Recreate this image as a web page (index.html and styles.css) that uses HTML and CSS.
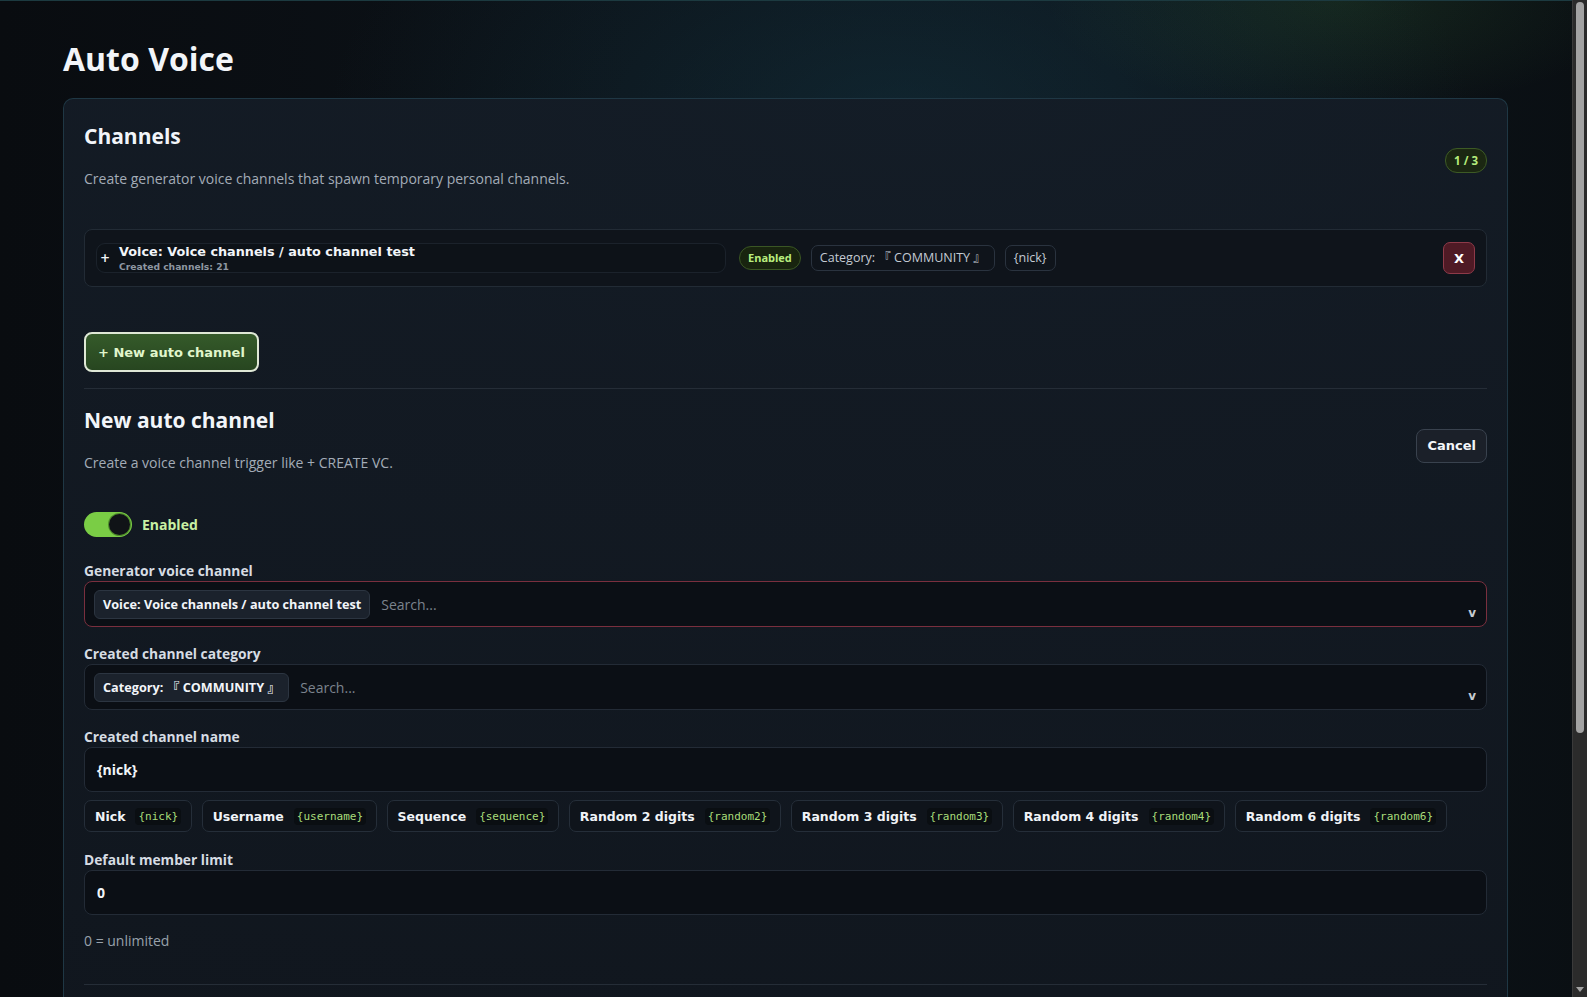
FILE: index.html
```html
<!DOCTYPE html>
<html lang="en">

<head>
	<meta charset="utf-8" />
	<title>Auto Voice</title>
	<link rel="stylesheet" href="styles.css">
</head>

<body>
	<main class="page">
		<h1 class="page-title">Auto Voice</h1>

		<section class="card">
			<header class="card-head">
				<div>
					<h2 class="card-title">Channels</h2>
					<p class="muted">Create generator voice channels that spawn temporary personal channels.</p>
				</div>
				<span class="count">1 / 3</span>
			</header>

			<!-- existing auto channels -->
			<div class="channel-row">
				<button class="row-expand" type="button">
					<span class="row-plus">+</span>
					<span class="row-text">
						<strong>Voice: Voice channels / auto channel test</strong>
						<small>Created channels: 21</small>
					</span>
				</button>
				<span class="pill-on">Enabled</span>
				<span class="chip">Category: 『 COMMUNITY 』</span>
				<span class="chip">{nick}</span>
				<button class="btn-remove" type="button">X</button>
			</div>

			<button class="btn-new" type="button">+ New auto channel</button>

			<hr class="divider">

			<!-- editor -->
			<header class="card-head form-head">
				<div>
					<h2 class="card-title">New auto channel</h2>
					<p class="muted">Create a voice channel trigger like + CREATE VC.</p>
				</div>
				<button class="btn-cancel" type="button">Cancel</button>
			</header>

			<label class="switch">
				<span class="switch-track"><span class="switch-knob"></span></span>
				<span class="switch-label">Enabled</span>
			</label>

			<div class="field">
				<div class="field-label">Generator voice channel</div>
				<div class="select select-invalid">
					<span class="select-chip">Voice: Voice channels / auto channel test</span>
					<span class="select-search">Search...</span>
					<span class="select-caret">v</span>
				</div>
			</div>

			<div class="field">
				<div class="field-label">Created channel category</div>
				<div class="select">
					<span class="select-chip">Category: 『 COMMUNITY 』</span>
					<span class="select-search">Search...</span>
					<span class="select-caret">v</span>
				</div>
			</div>

			<div class="field field-tokens">
				<div class="field-label">Created channel name</div>
				<div class="input">{nick}</div>
				<div class="tokens">
					<span class="token">Nick <code>{nick}</code></span>
					<span class="token">Username <code>{username}</code></span>
					<span class="token">Sequence <code>{sequence}</code></span>
					<span class="token">Random 2 digits <code>{random2}</code></span>
					<span class="token">Random 3 digits <code>{random3}</code></span>
					<span class="token">Random 4 digits <code>{random4}</code></span>
					<span class="token">Random 6 digits <code>{random6}</code></span>
				</div>
			</div>

			<div class="field">
				<div class="field-label">Default member limit</div>
				<div class="input">0</div>
				<p class="muted hint">0 = unlimited</p>
			</div>

			<hr class="divider divider-end">
		</section>
	</main>

	<!-- window scrollbar -->
	<div class="scrollbar">
		<span class="scrollbar-thumb"></span>
		<span class="scrollbar-arrow"></span>
	</div>
</body>

</html>
```

FILE: styles.css
```css
html {
	color-scheme: dark;
	background: #0a0d12;
}

body,
h1,
h2,
p,
hr {
	margin: 0;
	padding: 0;
}

body {
	height: 100vh;
	overflow: hidden;
	color: #e8edf3;
	font: 14px/1.5 "Open Sans", "Noto Sans CJK SC", sans-serif;
	background:
		radial-gradient(ellipse 420px 160px at 1340px 0, rgba(70, 140, 60, 0.16), transparent 70%),
		radial-gradient(ellipse 760px 400px at 900px 110px, rgba(22, 64, 80, 0.38), transparent 75%),
		linear-gradient(90deg, #090c10 0%, #0c1218 40%, #0d151c 70%, #0a0f13 100%);
	border-top: 1px solid #1c3a40;
}

button {
	font-family: "DejaVu Sans", "Noto Sans CJK SC", sans-serif;
	cursor: pointer;
}

.page {
	padding: 39px 79px 0 63px;
}

.page-title {
	font-size: 32px;
	line-height: 38px;
	font-weight: 700;
	color: #f2f5f9;
	margin-bottom: 20px;
}

.card {
	background: linear-gradient(180deg, rgba(20, 28, 38, 0.92), rgba(17, 23, 31, 0.95));
	border: 1px solid #1f3744;
	border-bottom: none;
	border-radius: 10px 10px 0 0;
	padding: 20px 20px 0;
	min-height: 900px;
}

.card-head {
	display: flex;
	align-items: center;
	justify-content: space-between;
	margin-bottom: 40px;
}

.card-title {
	font-size: 21px;
	line-height: 29px;
	font-weight: 700;
	color: #f2f5f9;
	margin-top: 3px;
}

.muted {
	color: #a3acb7;
	font-size: 14px;
	line-height: 21px;
	margin-top: 17px;
}

.count {
	margin-top: 12px;
	padding: 2px 8px;
	border-radius: 12px;
	border: 1px solid #3d5a25;
	background: #1b2712;
	color: #b5ec7c;
	font-size: 11.5px;
	font-weight: 700;
	line-height: 19px;
}

/* saved channel row */

.channel-row {
	display: flex;
	align-items: center;
	gap: 10px;
	padding: 12px 11px;
	border: 1px solid #222b35;
	border-radius: 8px;
	background: #0f141b;
}

.row-expand {
	display: flex;
	align-items: center;
	gap: 9px;
	width: 630px;
	height: 30px;
	margin-right: 3px;
	padding: 0 3px;
	border: 1px solid #1b222b;
	border-radius: 9px;
	background: #0d1218;
	color: #f2f5f9;
	text-align: left;
}

.row-plus {
	font-size: 12px;
	font-weight: 700;
}

.row-text {
	display: flex;
	flex-direction: column;
}

.row-text strong {
	font-size: 12.8px;
	line-height: 16px;
}

.row-text small {
	font-size: 9.2px;
	line-height: 13px;
	font-weight: 700;
	color: #8e97a2;
}

.pill-on {
	padding: 2px 8px;
	border-radius: 12px;
	border: 1px solid #3a5624;
	background: #18240f;
	color: #b8ee7e;
	font-size: 11px;
	font-weight: 700;
	line-height: 18px;
}

.chip {
	padding: 2px 8px;
	border-radius: 7px;
	border: 1px solid #2a333f;
	background: #0f141b;
	color: #c3cad3;
	font-size: 12.5px;
	line-height: 20px;
}

.btn-remove {
	margin-left: auto;
	width: 32px;
	height: 32px;
	border: 1px solid #8e3a49;
	border-radius: 7px;
	background: #4f1a25;
	color: #fff;
	font-size: 13px;
	font-weight: 700;
}

/* buttons */

.btn-new {
	display: block;
	margin-top: 45px;
	height: 40px;
	padding: 0 12px;
	border: 2px solid #dfe8d6;
	border-radius: 8px;
	background: linear-gradient(180deg, #355a2a, #274620);
	color: #e0f6cc;
	font-size: 13px;
	font-weight: 700;
}

.divider {
	border: none;
	height: 1px;
	background: #252d37;
	margin-top: 16px;
}

.form-head {
	margin-top: 17px;
	margin-bottom: 39px;
}

.form-head .card-title {
	margin-top: 0;
}

.btn-cancel {
	margin-top: 12px;
	height: 34px;
	padding: 0 10px;
	border: 1px solid #39424e;
	border-radius: 8px;
	background: #1b2029;
	color: #f4f6f9;
	font-size: 13px;
	font-weight: 700;
}

/* switch */

.switch {
	display: flex;
	align-items: center;
	gap: 10px;
}

.switch-track {
	display: flex;
	justify-content: flex-end;
	align-items: center;
	width: 48px;
	height: 25px;
	padding: 0 2px;
	box-sizing: border-box;
	border-radius: 13px;
	background: #7acd45;
}

.switch-knob {
	width: 21px;
	height: 21px;
	border-radius: 50%;
	background: #101317;
	box-shadow: 0 0 0 1px #4e8a2c;
}

.switch-label {
	color: #c9f0a4;
	font-weight: 700;
	font-size: 14px;
}

/* form fields */

.field {
	margin-top: 16px;
}

.switch + .field,
.field-tokens + .field {
	margin-top: 23px;
}

.field-tokens + .field {
	margin-top: 17px;
}

.field-label {
	color: #d6dce3;
	font-weight: 700;
	font-size: 13.8px;
	line-height: 21px;
}

.select,
.input {
	display: flex;
	align-items: center;
	box-sizing: border-box;
	height: 46px;
	border: 1px solid #232b36;
	border-radius: 8px;
	background: #0b0f15;
}

.select {
	padding: 0 9px;
	gap: 11px;
}

.select-invalid {
	border-color: #7a2f3e;
}

.select-chip {
	padding: 3px 8px;
	border: 1px solid #2c3541;
	border-radius: 6px;
	background: #1b222c;
	color: #f2f5f9;
	font-size: 12.7px;
	font-weight: 700;
	line-height: 21px;
}

.select-search {
	color: #7b838d;
	font-size: 14px;
}

.select-caret {
	margin-left: auto;
	align-self: flex-end;
	padding: 0 1px 7px 0;
	color: #c6cbd1;
	font: 700 12px/1 "DejaVu Sans", sans-serif;
}

.input {
	height: 45px;
	padding: 0 12px;
	color: #f2f5f9;
	font-weight: 700;
	font-size: 14px;
}

.tokens {
	display: flex;
	gap: 9.5px;
	margin-top: 8px;
}

.token {
	display: flex;
	align-items: center;
	gap: 10px;
	height: 32px;
	box-sizing: border-box;
	padding: 0 10px;
	border: 1px solid #252e39;
	border-radius: 7px;
	background: #0f141b;
	color: #f0f3f7;
	font: 700 12.5px "DejaVu Sans", sans-serif;
}

.token code {
	padding: 2px 3px;
	border-radius: 4px;
	background: #0a0e12;
	color: #a9dd7a;
	font: 11px "DejaVu Sans Mono", monospace;
}

.hint {
	margin-top: 15px;
	color: #98a1ab;
}

.divider-end {
	margin-top: 33px;
}

/* fake window scrollbar */

.scrollbar {
	position: fixed;
	top: 0;
	right: 0;
	bottom: 0;
	width: 15px;
	background: #2b2b2b;
	border-left: 1px solid #3a3a3a;
	box-sizing: border-box;
}

.scrollbar-thumb {
	position: absolute;
	top: 2px;
	left: 3px;
	width: 8px;
	height: 731px;
	border-radius: 4px;
	background: #a3a3a3;
}

.scrollbar-arrow {
	position: absolute;
	bottom: 5px;
	left: 3px;
	border-left: 4px solid transparent;
	border-right: 4px solid transparent;
	border-top: 5px solid #a3a3a3;
}
```
